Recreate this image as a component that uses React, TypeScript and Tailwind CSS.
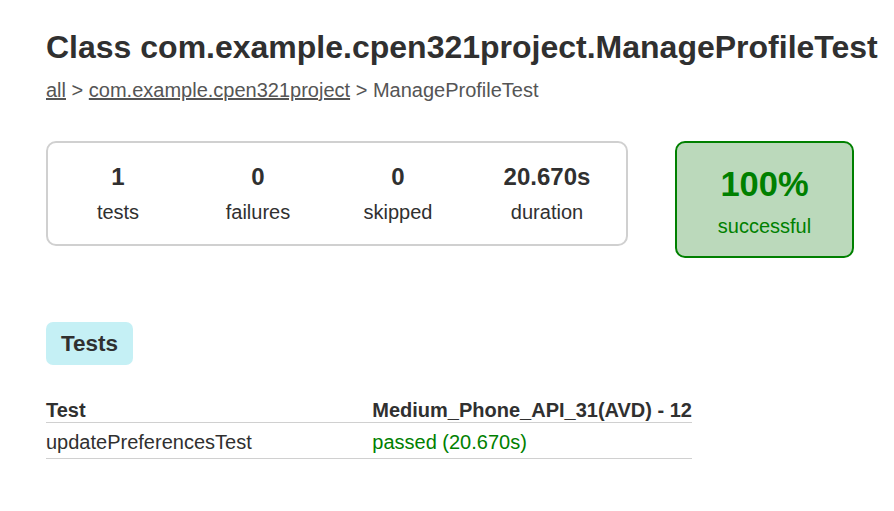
const counters = [
  { value: '1', label: 'tests', width: 'w-[140px]' },
  { value: '0', label: 'failures', width: 'w-[140px]' },
  { value: '0', label: 'skipped', width: 'w-[140px]' },
  { value: '20.670s', label: 'duration', width: 'w-[158px]' },
]

export default function App() {
  return (
    <div
      className="min-h-[511px] w-[894px] bg-white pl-[46px] pt-[27px] text-[#303030]"
      style={{ fontFamily: '"Liberation Sans", Arial, sans-serif' }}
    >
      <h1 className="whitespace-nowrap text-[32px] font-bold leading-[40px]">
        Class com.example.cpen321project.ManageProfileTest
      </h1>

      <div className="mt-[11px] text-[20px] leading-[24px] text-[#555]">
        <a className="underline" href="#">all</a>
        {' > '}
        <a className="underline" href="#">com.example.cpen321project</a>
        {' > '}
        ManageProfileTest
      </div>

      <div className="mt-[39px] flex items-start gap-[47px]">
        <div className="flex w-[582px] rounded-[10px] border-2 border-[#d0d0d0] pt-[20px] pb-[20px]">
          {counters.map((c) => (
            <div key={c.label} className={`${c.width} flex flex-col items-center`}>
              <div className="text-[24px] font-bold leading-[28px]">{c.value}</div>
              <div className="mt-[9px] text-[20px] leading-[24px]">{c.label}</div>
            </div>
          ))}
        </div>

        <div className="flex w-[179px] flex-col items-center rounded-[10px] border-2 border-[#008000] bg-[#bbd9bb] pt-[21px] pb-[18px] text-[#008000]">
          <div className="text-[34.5px] font-bold leading-[40px]">100%</div>
          <div className="mt-[10px] text-[20px] leading-[24px]">successful</div>
        </div>
      </div>

      <div className="mt-[64px] flex">
        <div className="h-[43px] rounded-[7px] bg-[#c5f0f5] px-[15px] text-[22.5px] font-bold leading-[43px]">
          Tests
        </div>
      </div>

      <table className="mt-[33px] w-[646px] border-collapse text-left text-[20px]">
        <thead>
          <tr className="border-b border-[#d0d0d0]">
            <th className="w-[327px] p-0 font-bold leading-[24px]">Test</th>
            <th className="p-0 font-bold leading-[24px] whitespace-nowrap">Medium_Phone_API_31(AVD) - 12</th>
          </tr>
        </thead>
        <tbody>
          <tr className="border-b border-[#d0d0d0]">
            <td className="p-0 pt-[7px] pb-[4px] leading-[24px]">updatePreferencesTest</td>
            <td className="p-0 pt-[7px] pb-[4px] leading-[24px] text-[#008000]">passed (20.670s)</td>
          </tr>
        </tbody>
      </table>
    </div>
  )
}
